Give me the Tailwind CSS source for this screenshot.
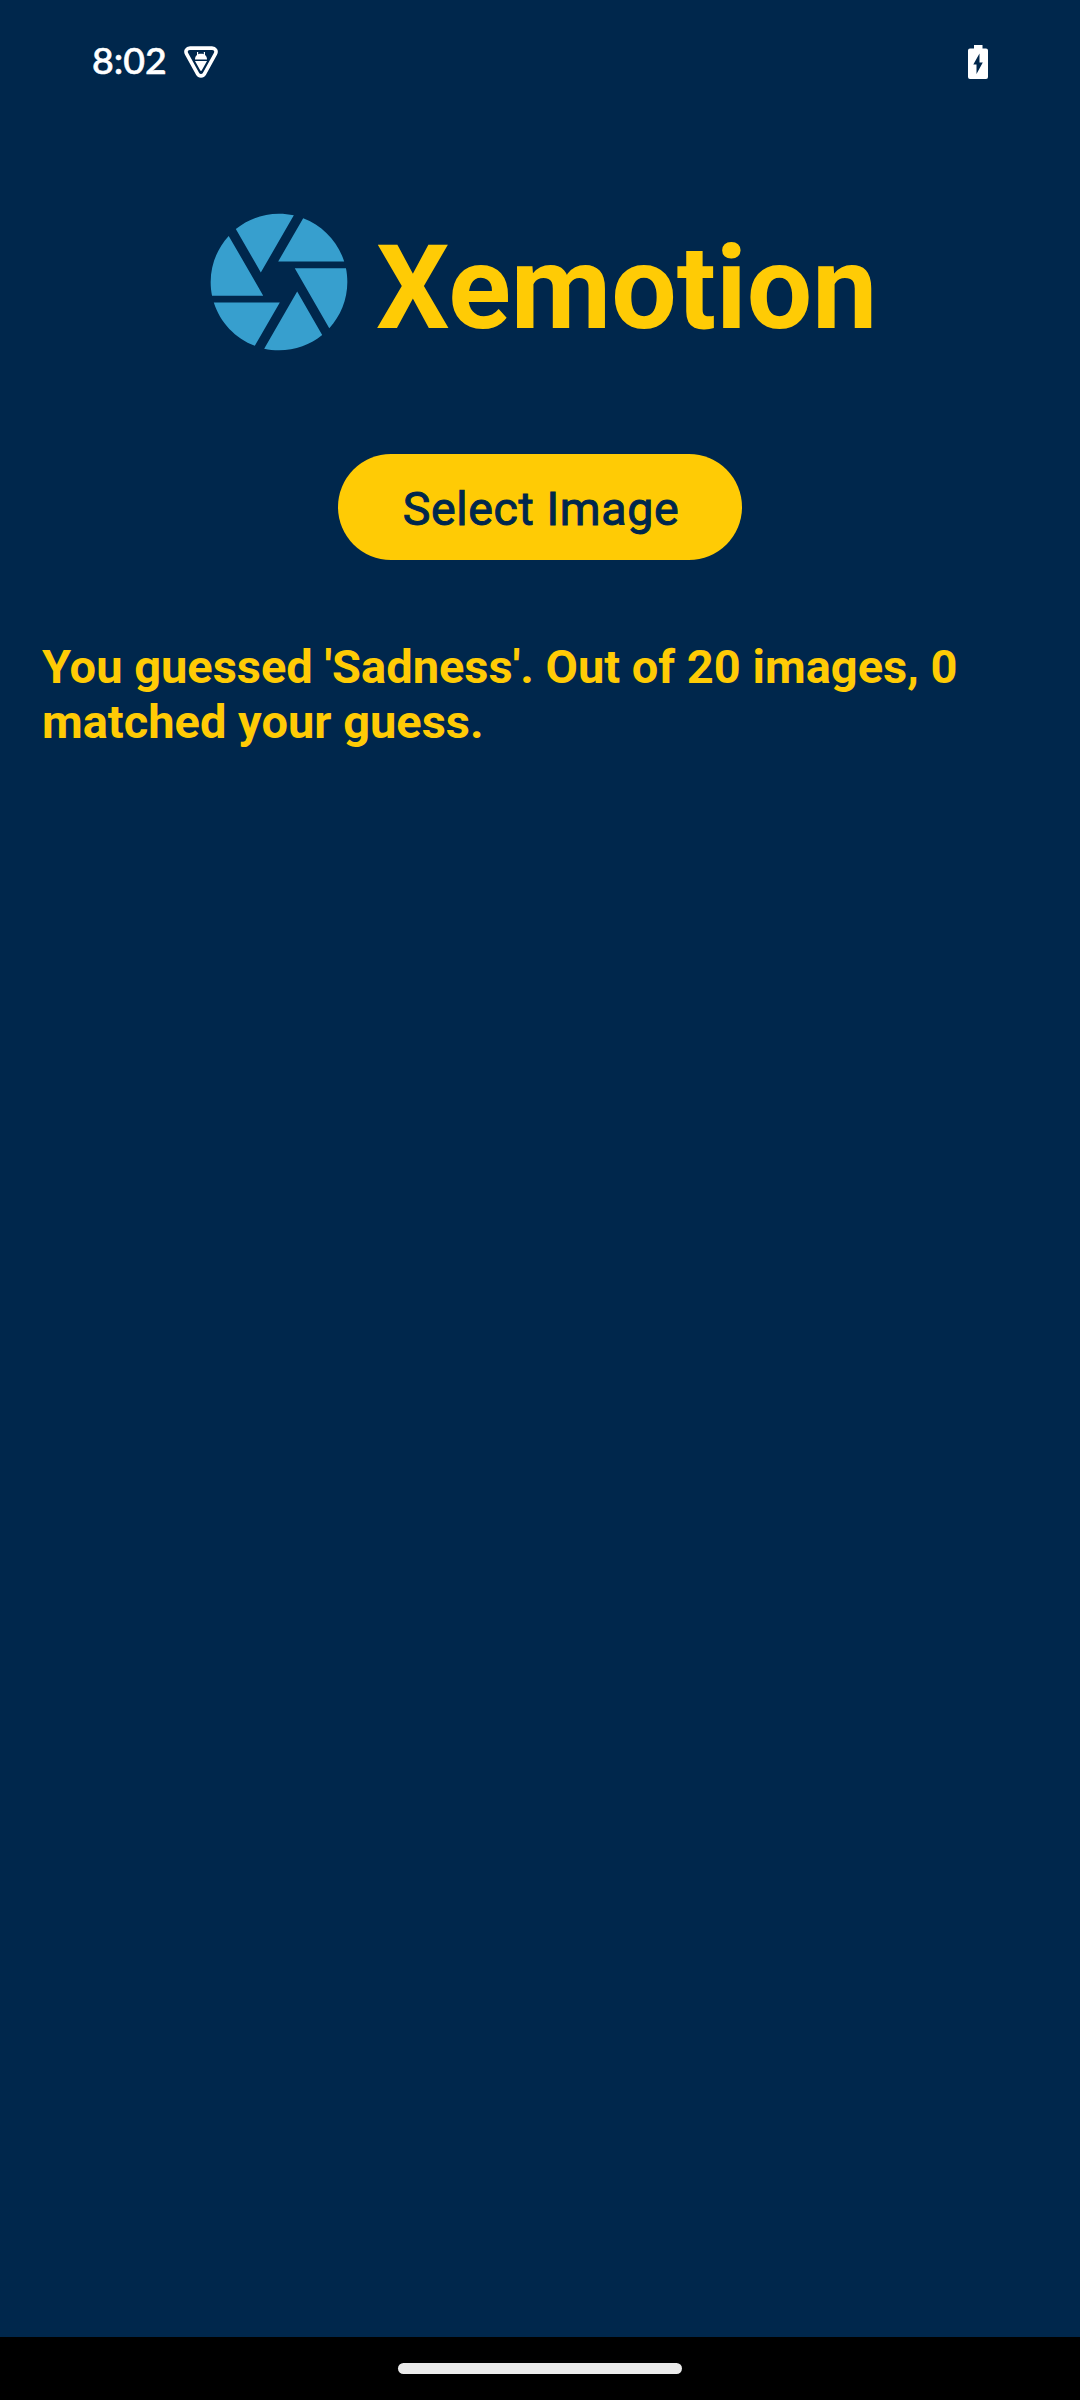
<!DOCTYPE html>
<html lang="en">
<head>
<meta charset="utf-8">
<title>Xemotion</title>
<script src="https://cdn.jsdelivr.net/npm/@tailwindcss/browser@4"></script>
</head>
<body class="flex h-[2400px] w-[1080px] flex-col overflow-hidden bg-[#00274c] font-['Roboto',sans-serif] text-[#ffcb05]">
  <header class="flex h-[124px] shrink-0 items-center justify-between pl-[92px] pr-[92px] text-white">
    <div class="flex items-center gap-[17px]">
      <span class="w-[75px] whitespace-nowrap pb-[5px] font-['Lato',sans-serif] text-[37.5px] font-medium leading-none [-webkit-text-stroke:0.6px_white]">8:02</span>
      <svg class="h-8 w-[34px]" viewBox="0 0 34 32" fill="none">
        <path d="M6 2.100h22c3.200 0 5 3 3.400 5.700L20.400 27.800c-1.500 2.700-5.300 2.700-6.800 0L2.600 7.800C1 5.100 2.800 2.100 6 2.100Z" stroke="#fff" stroke-width="3.600"/>
        <path d="M11 13.600c0-2.200.8-3.600 2-4.500V6h1.200v2.300c1.800-.6 3.800-.6 5.600 0V6H21v3.100c1.200.9 2 2.300 2 4.500Z M11 15h12l-5.300 9.600c-.3.600-1.100.6-1.400 0Z" fill="#fff"/>
      </svg>
    </div>
    <svg class="h-[34px] w-5" viewBox="0 0 20 34">
      <path fill="#fff" fill-rule="evenodd" d="M6 0h8.500v3.500H18a2 2 0 0 1 2 2V32a2 2 0 0 1-2 2H2a2 2 0 0 1-2-2V5.500a2 2 0 0 1 2-2h4ZM11.500 8.500 5.300 19.500h3.200v9.500l6.300-11.500h-3.300Z"/>
    </svg>
  </header>

  <main class="flex flex-1 flex-col">
    <div class="mt-[76px] flex h-[164px] items-center gap-[15px] pl-[197px]">
      <svg class="size-[164px] shrink-0" viewBox="0 0 24 24" fill="#379fce">
        <path d="M9.400 10.500l4.770-8.260C13.470 2.090 12.750 2 12 2c-2.400 0-4.600.85-6.320 2.250l3.660 6.350.06-.1zM21.540 9c-.92-2.920-3.150-5.260-6-6.340L11.880 9h9.660zm.26 1h-7.490l.29.5 4.760 8.250C21 16.970 22 14.610 22 12c0-.69-.07-1.350-.2-2zM8.540 12l-3.900-6.750C3.010 7.030 2 9.390 2 12c0 .69.07 1.350.2 2h7.490l-1.150-2zm-6.080 3c.92 2.920 3.150 5.260 6 6.340L12.120 15H2.460zm11.270 0l-3.900 6.760c.7.15 1.420.24 2.170.24 2.400 0 4.600-.85 6.320-2.250l-3.660-6.350-.93 1.600z"/>
      </svg>
      <h1 class="pt-[12px] text-[116px] font-bold leading-none">Xemotion</h1>
    </div>
    <button class="mt-[90px] flex h-[106px] w-[404px] items-center justify-center self-center rounded-full bg-[#ffcb05] pl-[2px] pt-[4px] text-[46.500px] font-normal leading-none tracking-[0.650px] text-[#00274c] [-webkit-text-stroke:1px_#00274c]">Select Image</button>
    <p class="mt-[79px] px-[42px] text-[47px] font-bold leading-[55px]">You guessed 'Sadness'. Out of 20 images, 0 matched your guess.</p>
  </main>

  <footer class="flex h-[63px] shrink-0 items-center justify-center bg-black">
    <div class="h-[11px] w-[284px] rounded-full bg-[#ebebeb]"></div>
  </footer>
</body>
</html>
